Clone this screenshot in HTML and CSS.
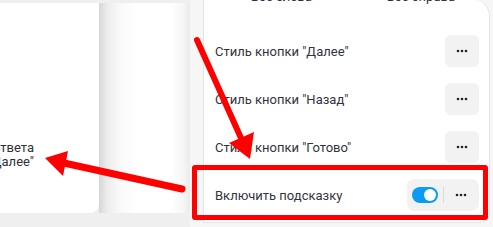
FILE: index.html
```html
<!DOCTYPE html>
<html lang="ru">
<head>
<meta charset="utf-8">
<link rel="stylesheet" href="styles.css">
</head>
<body>
<div class="app">
  <div class="canvas">
    <div class="card">
      <div class="card-text">Текст кнопки ответа<br>"Далее"</div>
    </div>
    <div class="gap"></div>
  </div>
  <div class="side">
    <div class="panel">
      <div class="head">
        <span>Все слева</span>
        <span>Все справа</span>
      </div>
      <div class="row">
        <span class="label">Стиль кнопки "Далее"</span>
        <button class="more"><svg width="12" height="4" viewBox="0 0 12 4"><circle cx="2" cy="2" r="1.3"/><circle cx="6" cy="2" r="1.3"/><circle cx="10" cy="2" r="1.3"/></svg></button>
      </div>
      <div class="row">
        <span class="label">Стиль кнопки "Назад"</span>
        <button class="more"><svg width="12" height="4" viewBox="0 0 12 4"><circle cx="2" cy="2" r="1.3"/><circle cx="6" cy="2" r="1.3"/><circle cx="10" cy="2" r="1.3"/></svg></button>
      </div>
      <div class="row">
        <span class="label">Стиль кнопки "Готово"</span>
        <button class="more"><svg width="12" height="4" viewBox="0 0 12 4"><circle cx="2" cy="2" r="1.3"/><circle cx="6" cy="2" r="1.3"/><circle cx="10" cy="2" r="1.3"/></svg></button>
      </div>
      <div class="row">
        <span class="label">Включить подсказку</span>
        <div class="group">
          <span class="toggle"><span class="knob"></span></span>
          <span class="divider"></span>
          <button class="more flat"><svg width="12" height="4" viewBox="0 0 12 4"><circle cx="2" cy="2" r="1.3"/><circle cx="6" cy="2" r="1.3"/><circle cx="10" cy="2" r="1.3"/></svg></button>
        </div>
      </div>
    </div>
  </div>
</div>
<div class="highlight"></div>
<svg class="arrows" width="493" height="227" viewBox="0 0 493 227">
  <line x1="197" y1="40" x2="241" y2="138" stroke="#ff0000" stroke-width="6" stroke-linecap="round"/>
  <polygon points="250,159 254,132 229,143" fill="#ff0000"/>
  <line x1="182" y1="189" x2="64" y2="163" stroke="#ff0000" stroke-width="7" stroke-linecap="round"/>
  <polygon points="45,158 68,151 63,176" fill="#ff0000"/>
</svg>
</body>
</html>
```

FILE: styles.css
```css
* { box-sizing: border-box; }
html, body {
  margin: 0;
  padding: 0;
}
body {
  width: 493px;
  height: 227px;
  overflow: hidden;
  background: #efefef;
  font-family: Roboto, "Liberation Sans", sans-serif;
  color: #343440;
  position: relative;
}
.app {
  display: flex;
  height: 227px;
  padding-top: 3px;
}
.canvas {
  width: 190px;
  height: 210px;
  display: flex;
  flex-shrink: 0;
}
.card {
  width: 99px;
  height: 210px;
  background: #fff;
  border-bottom-right-radius: 9px;
  padding-top: 138px;
  position: relative;
  z-index: 1;
}
.card-text {
  margin-left: -126px;
  width: 160px;
  text-align: right;
  font-size: 13px;
  line-height: 14px;
  color: #2f2f3a;
}
.gap {
  flex: 1;
  height: 210px;
  background: linear-gradient(to right, #d6d6d6 0px, #ececec 8px, #fafafa 22px, #ffffff 40px, #ffffff 72px, #f6f6f6 84px, #ebebeb 91px);
}
.side {
  flex: 1;
  background: #f6f6f6;
  margin-top: -3px;
  padding: 0 3px 4px 13px;
  display: flex;
}
.panel {
  flex: 1;
  background: #fff;
  border: 1px solid #e4e4e4;
  border-top: none;
  border-radius: 0 16px 10px 0;
  padding: 0 10px 0 11px;
  position: relative;
}
.head {
  display: flex;
  gap: 75px;
  padding-left: 36px;
  margin-top: -11px;
  height: 38px;
  font-size: 13px;
  color: #2f2f3a;
}
.row {
  height: 48px;
  display: flex;
  align-items: center;
  justify-content: space-between;
}
.label {
  font-size: 13px;
  color: #33333f;
}
.more {
  width: 34px;
  height: 32px;
  border: none;
  background: #f2f2f2;
  border-radius: 6px;
  padding: 0;
  display: flex;
  align-items: center;
  justify-content: center;
  fill: #222;
}
.more.flat {
  background: transparent;
}
.group {
  display: flex;
  align-items: center;
  height: 32px;
  width: 72px;
  background: #f2f2f2;
  border-radius: 8px;
  padding-left: 5px;
}
.toggle {
  width: 26px;
  height: 16px;
  border-radius: 8px;
  background: #0b9bf2;
  display: flex;
  align-items: center;
  justify-content: flex-end;
  padding-right: 2px;
}
.knob {
  width: 12px;
  height: 12px;
  border-radius: 50%;
  background: #fff;
}
.divider {
  width: 1px;
  height: 16px;
  background: #dcdcdc;
  margin-left: 5px;
}
.highlight {
  position: absolute;
  left: 192px;
  top: 165px;
  width: 296px;
  height: 55px;
  border: 5px solid #ff0000;
  border-radius: 3px;
  z-index: 5;
}
.arrows {
  position: absolute;
  left: 0;
  top: 0;
  z-index: 6;
  pointer-events: none;
}
```
